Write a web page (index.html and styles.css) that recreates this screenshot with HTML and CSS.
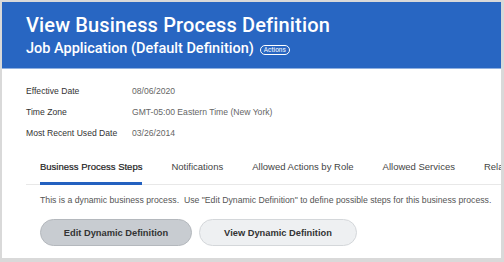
FILE: index.html
```html
<!DOCTYPE html>
<html>
<head>
<meta charset="utf-8">
<link rel="stylesheet" href="styles.css">
</head>
<body>
<div class="frame">
  <header class="hero">
    <h1 class="title">View Business Process Definition</h1>
    <div class="subtitle">
      <span>Job Application (Default Definition)</span>
      <span class="pill">Actions</span>
    </div>
  </header>
  <section class="fields">
    <div class="row"><span class="label">Effective Date</span><span class="value">08/06/2020</span></div>
    <div class="row"><span class="label">Time Zone</span><span class="value">GMT-05:00 Eastern Time (New York)</span></div>
    <div class="row"><span class="label">Most Recent Used Date</span><span class="value">03/26/2014</span></div>
  </section>
  <nav class="tabs">
    <span class="tab active">Business Process Steps</span>
    <span class="tab">Notifications</span>
    <span class="tab">Allowed Actions by Role</span>
    <span class="tab">Allowed Services</span>
    <span class="tab">Related</span>
  </nav>
  <p class="desc">This is a dynamic business process.&nbsp; Use "Edit Dynamic Definition" to define possible steps for this business process.</p>
  <div class="buttons">
    <button class="btn btn-edit">Edit Dynamic Definition</button>
    <button class="btn btn-view">View Dynamic Definition</button>
  </div>
</div>
</body>
</html>
```

FILE: styles.css
```css
html, body {
  margin: 0;
  padding: 0;
  background: #ffffff;
}
body {
  width: 504px;
  height: 262px;
  overflow: hidden;
  font-family: "Liberation Sans", Arial, sans-serif;
}
.frame {
  box-sizing: border-box;
  width: 504px;
  height: 262px;
  border-top: 2px solid #d9d9d9;
  border-left: 2px solid #d9d9d9;
  border-right: 3px solid #d9d9d9;
  border-bottom: 4px solid #d9d9d9;
  overflow: hidden;
  background: #fff;
}
.hero {
  background: #2866c2;
  height: 67px;
  box-sizing: border-box;
  padding: 11px 0 0 24px;
  color: #fff;
  border-bottom: 1px solid #8fb0e0;
}
.title {
  margin: 0;
  font-family: Roboto, sans-serif;
  font-weight: 500;
  font-size: 20px;
  line-height: 24px;
  letter-spacing: 0.15px;
}
.subtitle {
  display: flex;
  align-items: center;
  gap: 6px;
  margin-top: 3px;
  font-family: Roboto, sans-serif;
  font-weight: 500;
  font-size: 14.5px;
  line-height: 18px;
}
.pill {
  font-size: 6.5px;
  font-weight: 400;
  line-height: 8px;
  border: 1px solid #fff;
  border-radius: 6px;
  padding: 0 3px;
  margin-top: 1px;
}
.fields {
  padding: 17px 0 0 24px;
  display: flex;
  flex-direction: column;
  gap: 11px;
}
.row {
  display: flex;
  font-size: 8.6px;
  line-height: 10px;
}
.label {
  width: 106px;
  color: #333;
}
.value {
  color: #666;
}
.tabs {
  margin: 20px 0 0 24px;
  padding-left: 14px;
  display: flex;
  gap: 29px;
  border-bottom: 1px solid #e8e8e8;
  white-space: nowrap;
  font-size: 9.5px;
  color: #444;
}
.tab {
  padding: 3px 0 11px;
  line-height: 12px;
}
.tab.active {
  color: #222;
  border-bottom: 3px solid #2361c0;
  padding-bottom: 9px;
  margin-bottom: -1px;
  -webkit-text-stroke: 0.2px #222;
}
.desc {
  margin: 10px 0 0 38px;
  font-size: 8.7px;
  line-height: 10px;
  color: #555;
  white-space: nowrap;
}
.buttons {
  display: flex;
  gap: 7px;
  margin: 14px 0 0 38px;
}
.btn {
  height: 27px;
  border-radius: 14px;
  font-family: "Liberation Sans", Arial, sans-serif;
  font-weight: bold;
  font-size: 9.3px;
  color: #333;
  padding: 0;
}
.btn-edit {
  width: 152px;
  background: #c8ccd1;
  border: 1px solid #b4b8bd;
}
.btn-view {
  width: 158px;
  background: #eef0f2;
  border: 1px solid #d4d7da;
}
```
